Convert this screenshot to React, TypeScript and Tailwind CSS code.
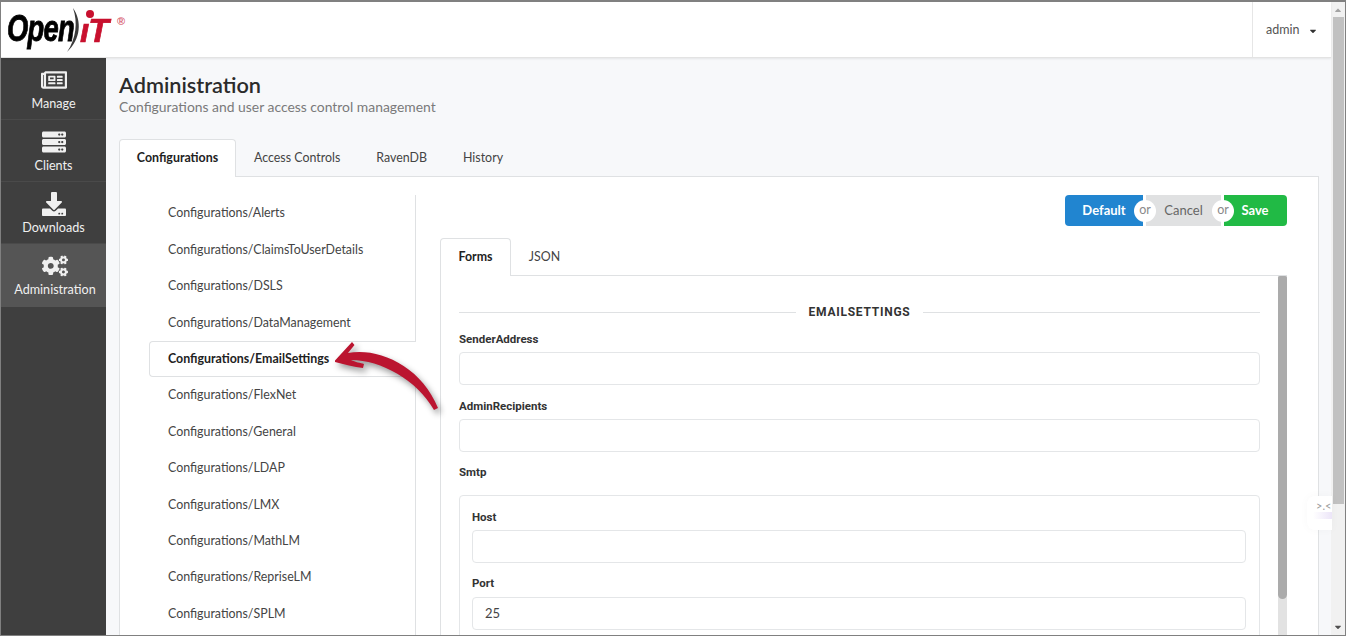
import { FaRegNewspaper, FaServer, FaDownload, FaCogs, FaCaretDown, FaCaretUp } from "react-icons/fa";

const nav = [
  { label: "Manage", Icon: FaRegNewspaper, active: false },
  { label: "Clients", Icon: FaServer, active: false },
  { label: "Downloads", Icon: FaDownload, active: false },
  { label: "Administration", Icon: FaCogs, active: true },
];

const items = [
  "Alerts", "ClaimsToUserDetails", "DSLS", "DataManagement", "EmailSettings", "FlexNet",
  "General", "LDAP", "LMX", "MathLM", "RepriseLM", "SPLM",
];

function Field({ label, value = "", labelClass = "h-[26px] pt-[6px]" }: { label: string; value?: string; labelClass?: string }) {
  return (
    <div>
      <div className={`${labelClass} text-[11.5px] font-bold leading-[14px] text-[#333] font-['Roboto',sans-serif]`}>{label}</div>
      <div className="flex h-[33px] items-center rounded-[4px] border border-[#e4e6e8] bg-white px-[12px] text-[13px] text-[#444]">{value}</div>
    </div>
  );
}

function Logo() {
  return (
    <div className="relative h-[56px] w-[130px] select-none">
      <span className="absolute left-[6px] top-[8px] origin-left text-[36px] font-bold italic leading-[38px] tracking-[-1px] text-black [-webkit-text-stroke:0.8px_black] [transform:scaleX(0.76)] font-['Liberation_Sans',sans-serif]">Open</span>
      <svg className="absolute left-[64px] top-[6px]" width="18" height="46" viewBox="0 0 18 46">
        <path d="M8 0 C17 13 16 31 2 44 C11 31 13 14 8 0 Z" fill="#3a3a3a" />
      </svg>
      <svg className="absolute left-[82px] top-[7px]" width="12" height="12" viewBox="0 0 12 12">
        <circle cx="7" cy="5" r="4" fill="#c8102e" />
      </svg>
      <span className="absolute left-[79px] top-[10px] origin-left text-[33px] font-bold italic leading-[38px] tracking-[-1px] text-[#c8102e] [-webkit-text-stroke:0.7px_#c8102e] [transform:scaleX(1.02)] font-['Liberation_Sans',sans-serif]">ıT</span>
      <span className="absolute left-[116px] top-[14px] text-[11px] font-bold leading-[11px] text-[#d8606f] font-['Liberation_Sans',sans-serif]">®</span>
    </div>
  );
}

function Or() {
  return (
    <span className="absolute left-full top-1/2 z-10 flex h-[22px] w-[22px] -translate-x-[9px] -translate-y-1/2 items-center justify-center rounded-full bg-white text-[12.5px] font-normal text-[#8a8a8a]">or</span>
  );
}

export default function App() {
  return (
    <div className="relative flex h-[636px] w-[1346px] overflow-hidden border-x border-b border-t-2 border-[#808080] bg-[#f7f8fa] font-['Lato',sans-serif]">
      <div className="flex min-w-0 flex-1 flex-col">
        <header className="z-10 flex h-[56px] shrink-0 items-center justify-between border-b border-[#e3e3e3] bg-white shadow-[0_1px_2px_rgba(0,0,0,0.08)]">
          <Logo />
          <div className="flex h-full w-[79px] items-center gap-[9px] border-l border-[#e6e6e6] pl-[13px] pt-[2px] text-[12.5px] text-[#555]">
            <span>admin</span>
            <FaCaretDown className="text-[10px] text-[#333]" />
          </div>
        </header>
        <div className="flex min-h-0 flex-1">
          <aside className="w-[105px] shrink-0 bg-[#3f3f3f] text-[#f0f0f0]">
            {nav.map(({ label, Icon, active }) => (
              <div key={label} className={`flex flex-col items-center border-b pt-[10px] ${active ? "h-[63px] border-b-transparent bg-[#555555] pl-[3px]" : "h-[62px] border-[#4a4a4a]"}`}>
                <Icon className="h-[24px] w-[26px]" />
                <span className="mt-[3px] text-[12.6px] leading-[17px]">{label}</span>
              </div>
            ))}
          </aside>
          <main className="min-w-0 flex-1 pl-[13px] pr-[12px]">
            <h1 className="mt-[15px] text-[21.7px] font-semibold leading-[24px] text-[#2b2b2b]">Administration</h1>
            <p className="text-[13.9px] leading-[19px] text-[#7a7a7a]">Configurations and user access control management</p>
            <div className="relative z-[1] mt-[23px] flex h-[38px] items-stretch text-[12.4px] text-[#444]">
              <div className="flex w-[117px] items-center justify-center rounded-t-[4px] border border-b-0 border-[#dfe1e3] bg-white font-bold text-[#222]">Configurations</div>
              <div className="flex items-center px-[18px]">Access Controls</div>
              <div className="flex items-center px-[18px]">RavenDB</div>
              <div className="flex items-center px-[18px]">History</div>
            </div>
            <section className="-mt-px flex h-[500px] border border-[#dfe1e3] bg-white pl-[30px] pt-[18px]">
              <ul className="w-[266px] shrink-0 border-r border-[#dfe1e3] pt-[0.5px] text-[12.4px] text-[#444]">
                {items.map((name) => {
                  const active = name === "EmailSettings";
                  return (
                    <li key={name} className={`flex h-[36.4px] items-center pl-[18px] ${active ? "relative -ml-px -mr-px rounded-l-[4px] border border-r-0 border-[#dfe1e3] bg-white font-bold text-[#222]" : ""}`}>
                      Configurations/{name}
                    </li>
                  );
                })}
              </ul>
              <div className="ml-[24px] w-[847px] shrink-0">
                <div className="flex h-[31px] justify-end text-[13px]">
                  <div className="relative flex w-[78px] items-center justify-center rounded-l-[4px] bg-[#2185d0] font-bold text-white">Default<Or /></div>
                  <div className="relative ml-[3px] flex w-[75px] items-center justify-center bg-[#e0e1e2] text-[#666]">Cancel<Or /></div>
                  <div className="ml-[3px] flex w-[63px] items-center justify-center rounded-r-[4px] bg-[#21ba45] pr-[1px] font-bold text-white">Save</div>
                </div>
                <div className="relative z-[1] mt-[12px] flex h-[38px] items-stretch text-[12.4px] text-[#444]">
                  <div className="flex w-[71px] items-center justify-center rounded-t-[4px] border border-b-0 border-[#dfe1e3] bg-white font-bold text-[#222]">Forms</div>
                  <div className="flex w-[67px] items-center justify-center">JSON</div>
                </div>
                <div className="-mt-px flex h-[420px] border-l border-t border-[#dfe1e3]">
                  <div className="min-w-0 flex-1 px-[18px] pt-[26px]">
                    <div className="flex h-[20px] items-center gap-[13px]">
                      <div className="h-px flex-1 bg-[#dfe1e3]" />
                      <span className="text-[12px] font-bold tracking-[0.75px] text-[#333] font-['Roboto',sans-serif]">EMAILSETTINGS</span>
                      <div className="h-px flex-1 bg-[#dfe1e3]" />
                    </div>
                    <Field label="SenderAddress" labelClass="h-[30px] pt-[10px]" />
                    <Field label="AdminRecipients" labelClass="h-[34px] pt-[14px]" />
                    <div className="h-[43px] pt-[13px] text-[11.5px] font-bold leading-[14px] text-[#333] font-['Roboto',sans-serif]">Smtp</div>
                    <div className="rounded-[4px] border border-[#e4e6e8] pb-[20px] pl-[12px] pr-[13px] pt-[8px]">
                      <Field label="Host" labelClass="h-[26px] pt-[6px]" />
                      <Field label="Port" value="25" labelClass="h-[34px] pt-[13px]" />
                    </div>
                  </div>
                  <div className="w-[9px] shrink-0 bg-[#e2e2e2]">
                    <div className="h-[323px] rounded-b-[5px] rounded-t-[2px] bg-[#ababab]" />
                  </div>
                </div>
              </div>
            </section>
          </main>
        </div>
      </div>
      <div className="flex w-[14px] shrink-0 flex-col items-center bg-[#f1f1f1]">
        <FaCaretUp className="mt-[3px] h-[10px] w-[10px] text-[#a3a3a3]" />
        <div className="mt-[2px] h-[487px] w-[11px] bg-[#c1c1c1]" />
        <div className="flex-1" />
        <FaCaretDown className="mb-[3px] h-[10px] w-[10px] text-[#505050]" />
      </div>
      {/* annotation arrow over the page */}
      <svg className="pointer-events-none absolute left-[325px] top-[330px] z-20 [filter:drop-shadow(3px_4px_3px_rgba(0,0,0,0.4))]" width="125" height="90" viewBox="325 330 125 90">
        <path d="M334 358.5 L351 340 L353.5 343 L347 351 C376 345 420 363 437 406 L433 408 C416 378 380 358 350 358 C354 360 360 361 363 362 L362 366 C353 365 343 362 334 360 Z" fill="#bb1530" />
      </svg>
      {/* faint floating widget */}
      <div className="pointer-events-none absolute left-[1306px] top-[494px] z-20 h-[34px] w-[25px] overflow-hidden rounded-l-[8px] bg-white shadow-[0_0_10px_rgba(0,0,0,0.03)]">
        <span className="absolute left-[9px] top-[3px] text-[11px] leading-[13px] text-[#9a9a9a]">&gt;.&lt;</span>
        <div className="absolute left-[6px] top-[16px] h-[7px] w-[19px] bg-gradient-to-r from-white to-[#ece5f8]" />
      </div>
    </div>
  );
}
